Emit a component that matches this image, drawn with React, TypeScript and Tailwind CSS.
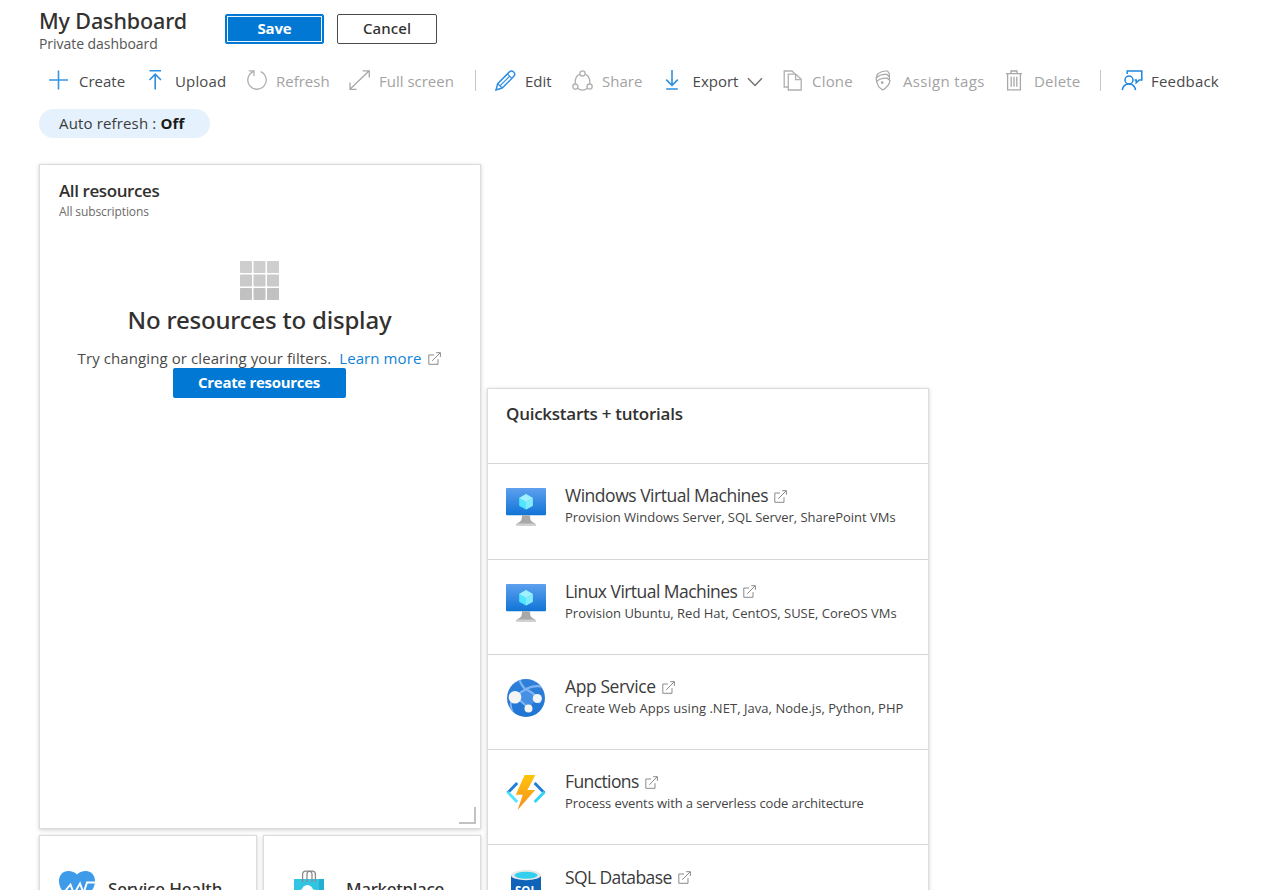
import type { ReactNode } from "react";
import { clsx } from "clsx";

interface IconProps {
  className?: string;
}

function PlusIcon() {
  return (
    <svg width="20" height="20" viewBox="0 0 20 20" fill="none" stroke="#3b95e0" strokeWidth="1.6">
      <path d="M10.5 0.5V19.5M1 10H20" />
    </svg>
  );
}

function UploadIcon() {
  return (
    <svg width="20" height="20" viewBox="0 0 20 20" fill="none" stroke="#2f8fe0" strokeWidth="1.6">
      <path d="M3.5 0.8H15M9.2 19.5V4.5M3.5 10L9.2 4.2L15 10" />
    </svg>
  );
}

function RefreshIcon() {
  return (
    <svg width="21" height="20" viewBox="0 0 21 20" fill="none" stroke="#b0b0b0" strokeWidth="1.3">
      <path d="M14.6 1.6A9.2 9.2 0 1 1 7.4 1.6M2.8 0.9H8V6" />
    </svg>
  );
}

function FullScreenIcon() {
  return (
    <svg width="21" height="20" viewBox="0 0 21 20" fill="none" stroke="#a8a8a8" strokeWidth="1.3">
      <path d="M1.2 19L20.2 0.8M13.6 0.8H20.3V7.4M1 12.6V19.3H7.6" />
    </svg>
  );
}

function EditIcon() {
  return (
    <svg width="21" height="21" viewBox="0 0 21 21" fill="none" stroke="#2f8fe0" strokeWidth="1.5">
      <path d="M1 20L2.7 13.6L14.2 2.1A3.1 3.1 0 0 1 18.7 6.5L7.2 18Z" />
      <path d="M12.4 3.9L16.9 8.4M2.7 13.6L7.2 18M5.2 15.7L15 5.9" strokeWidth="1.2" />
    </svg>
  );
}

function ShareIcon() {
  return (
    <svg width="21" height="21" viewBox="0 0 21 21" fill="none" stroke="#b0b0b0" strokeWidth="1.3">
      <circle cx="10.5" cy="3.4" r="2.6" />
      <circle cx="3.4" cy="16.6" r="2.6" />
      <circle cx="17.6" cy="16.6" r="2.6" />
      <path d="M7.9 4.2C4.6 5.4 2.8 8.8 3.2 13.9M13.1 4.2C16.4 5.4 18.2 8.8 17.8 13.9M5.6 18.3C8.4 20.6 12.6 20.6 15.4 18.3" />
    </svg>
  );
}

function ExportIcon() {
  return (
    <svg width="20" height="20" viewBox="0 0 20 20" fill="none" stroke="#2f8fe0" strokeWidth="1.6">
      <path d="M10 0V15.2M4.2 9.6L10 15.3L15.8 9.6M4.2 19H15.8" />
    </svg>
  );
}

function ChevronIcon() {
  return (
    <svg width="16" height="10" viewBox="0 0 16 10" fill="none" stroke="#707070" strokeWidth="1.4" className="mt-1">
      <path d="M1 1.2L8 8.4L15 1.2" />
    </svg>
  );
}

function CloneIcon() {
  return (
    <svg width="20" height="21" viewBox="0 0 20 21" fill="none" stroke="#b0b0b0" strokeWidth="1.3">
      <path d="M5.3 17H1.2V1H9L12 4" />
      <path d="M5.3 4.2H12.8L18.2 9.4V20H5.3ZM12.6 4.4V9.6H18" />
    </svg>
  );
}

function TagsIcon() {
  return (
    <svg width="20" height="21" viewBox="0 0 20 21" fill="none" stroke="#a8a8a8" strokeWidth="1.2">
      <path d="M2.6 11.6C5.2 9 8.6 8 13.2 8.2L16 10.6C15.4 14.4 12.8 17.6 8.6 20L4.6 16.6Z" />
      <path d="M2.6 11.6L2.2 8C5 5 8.6 4 13 4.4L15.4 7V10.2" />
      <path d="M2.2 8L3.4 4.2C6.2 1.8 9.4 0.8 13.6 1L15.4 4V7" />
      <circle cx="8.2" cy="12.6" r="0.8" />
    </svg>
  );
}

function TrashIcon() {
  return (
    <svg width="18" height="21" viewBox="0 0 18 21" fill="none" stroke="#a8a8a8" strokeWidth="1.3">
      <path d="M1 3.6H17M6 3.4V1H12V3.4M2.6 3.8V19.8H15.4V3.8M6.2 6.8V16.8M9 6.8V16.8M11.8 6.8V16.8" />
    </svg>
  );
}

function FeedbackIcon() {
  return (
    <svg width="22" height="21" viewBox="0 0 22 21" fill="none" stroke="#1f86de" strokeWidth="1.5">
      <circle cx="8" cy="10" r="4" />
      <path d="M1.2 20.2C1.8 16.2 4.4 14 8 14S14 16.4 14.6 20.2" />
      <path d="M6.2 4V1H20.8V10H18.2L15.2 12.8V10H13.6" />
    </svg>
  );
}

function ExternalIcon({ className }: IconProps) {
  return (
    <svg width="13" height="13" viewBox="0 0 13 13" fill="none" stroke="#858585" strokeWidth="0.95" className={className}>
      <path d="M6 3H0.8V12.3H10V7.2M4.2 8.8L12.2 0.8M8.2 0.7H12.4V4.9" />
    </svg>
  );
}

function GridIcon() {
  const cells = [0, 1, 2];
  return (
    <svg width="39" height="39" viewBox="0 0 39 39">
      {cells.map((row) =>
        cells.map((col) => (
          <rect
            key={`${row}-${col}`}
            x={col * 13.5}
            y={row * 13.5}
            width="12"
            height="12"
            rx="0.8"
            fill={row === 2 ? "#c1c1c1" : row === 1 ? "#cacaca" : "#cecece"}
          />
        )),
      )}
    </svg>
  );
}

function VmIcon({ id }: { id: string }) {
  return (
    <svg width="40" height="38" viewBox="0 0 40 38">
      <defs>
        <linearGradient id={id} x1="0" y1="0" x2="0" y2="1">
          <stop offset="0" stopColor="#5ea0ef" />
          <stop offset="1" stopColor="#0f74d6" />
        </linearGradient>
      </defs>
      <rect width="40" height="27.3" rx="1" fill={`url(#${id})`} />
      <path d="M16 27.3H24C24 32 25 33.8 28.6 35.2Q29.8 35.8 29.8 37.4H10.2Q10.2 35.8 11.4 35.2C15 33.8 16 32 16 27.3Z" fill="#a8a8a8" />
      <path d="M10.2 37.4Q10.2 35.6 12 35.4H28Q29.8 35.6 29.8 37.4Z" fill="#cfcfcf" />
      <path d="M20 6L26.8 9.9V17.7L20 21.6L13.2 17.7V9.9Z" fill="#50e6ff" />
      <path d="M20 6L26.8 9.9L20 13.8L13.2 9.9Z" fill="#9feffc" />
      <path d="M20 13.8L26.8 9.9V17.7L20 21.6Z" fill="#84e9fb" />
    </svg>
  );
}

function AppServiceIcon() {
  return (
    <svg width="40" height="38" viewBox="0 0 40 38">
      <defs>
        <linearGradient id="globe" x1="0" y1="0" x2="0" y2="1">
          <stop offset="0" stopColor="#2f80da" />
          <stop offset="1" stopColor="#1f75d3" />
        </linearGradient>
        <clipPath id="globe-clip">
          <circle cx="20" cy="19" r="19" />
        </clipPath>
      </defs>
      <circle cx="20" cy="19" r="19" fill="url(#globe)" />
      <g clipPath="url(#globe-clip)" fill="none" stroke="#7fb4f1" strokeWidth="2.2">
        <path d="M20 10L10 18L22.6 29L31.5 19Z" fill="#4590e4" stroke="none" />
        <path d="M13 0C15 5 17 8 19 9.6C23 12 28 14 31.5 19" />
        <path d="M10 18C16 11 26 5 37 8" />
        <path d="M10 18L22.6 29M6 20C4 24 4 28 7 34M31.5 19L34 24" strokeWidth="1.8" />
      </g>
      <circle cx="9" cy="18.2" r="6.3" fill="#f4f4f4" />
      <circle cx="31.3" cy="19.5" r="4.6" fill="#f4f4f4" />
      <circle cx="22.5" cy="29.4" r="4" fill="#f4f4f4" />
    </svg>
  );
}

function FunctionsIcon() {
  return (
    <svg width="40" height="38" viewBox="0 0 40 38">
      <defs>
        <linearGradient id="bolt" x1="0" y1="0" x2="0" y2="1">
          <stop offset="0" stopColor="#fdc50c" />
          <stop offset="1" stopColor="#f78d1e" />
        </linearGradient>
      </defs>
      <g fill="none" strokeWidth="2.9">
        <path d="M11.2 8.9L1.6 19.1" stroke="#1f7fd8" />
        <path d="M1.6 17.9L11.2 28.1" stroke="#50e6ff" />
        <path d="M28.6 8.9L38.4 19.1" stroke="#1f7fd8" />
        <path d="M38.4 17.9L28.6 28.1" stroke="#32d4f5" />
      </g>
      <path d="M18.6 1H29.4L21.4 16H29.2L11.6 36L16.8 20.8H9.8Z" fill="url(#bolt)" />
    </svg>
  );
}

function SqlIcon() {
  return (
    <svg width="40" height="38" viewBox="0 0 40 38">
      <path d="M5 6V33C5 35.8 11.8 38 20 38S35 35.8 35 33V6Z" fill="#0f63b8" />
      <ellipse cx="20" cy="6.2" rx="15" ry="5.1" fill="#e8e8e8" />
      <ellipse cx="20" cy="6.3" rx="11.6" ry="3.5" fill="#32cfee" />
      <text x="20" y="26" textAnchor="middle" fontSize="11.5" fontWeight="700" fill="#fff">
        SQL
      </text>
    </svg>
  );
}

function HeartIcon() {
  return (
    <svg width="36" height="34" viewBox="0 0 36 34">
      <path d="M18 33C10 27 0 20 0 10C0 4 4 0 9.2 0C13 0 16 1.4 18 3.6C20 1.4 23 0 26.8 0C32 0 36 4 36 10C36 20 26 27 18 33Z" fill="#3d9bea" />
      <path d="M6.5 19.5L11.5 13.5L15 23L21 12.5L24.5 22L28 11.5H36" fill="none" stroke="#fff" strokeWidth="1.9" />
    </svg>
  );
}

function BagIcon() {
  return (
    <svg width="30" height="38" viewBox="0 0 30 38">
      <rect y="9" width="30" height="29" fill="#32c5e2" />
      <rect x="25" y="9" width="5" height="29" fill="#24b0cf" />
      <path d="M8.6 12V4.5Q8.6 1.2 11.8 1.2H14.6Q18 1.2 18 4.5V12M13 12V4.5Q13 1.2 16 1.2H18.2Q21.4 1.2 21.4 4.5V12" fill="none" stroke="#8a8a8a" strokeWidth="1.3" />
      <circle cx="13.4" cy="20.6" r="5.6" fill="#fff" />
      <circle cx="7.6" cy="23.6" r="4" fill="#fff" />
      <circle cx="19.4" cy="23" r="3.6" fill="#fff" />
    </svg>
  );
}

interface CommandProps {
  icon: ReactNode;
  label: string;
  className: string;
  labelClass: string;
  disabled?: boolean;
  children?: ReactNode;
}

function Command({ icon, label, className, labelClass, disabled, children }: CommandProps) {
  return (
    <button type="button" disabled={disabled} className={clsx("flex h-6 shrink-0 items-center", className)}>
      {icon}
      <span
        className={clsx(
          "whitespace-nowrap pt-px text-[15px] leading-5",
          labelClass,
          disabled ? "text-[#a3a3a3]" : "text-[#4a4a4a]",
        )}
      >
        {label}
      </span>
      {children}
    </button>
  );
}

const quickstarts = [
  {
    title: "Windows Virtual Machines",
    text: "Provision Windows Server, SQL Server, SharePoint VMs",
    icon: <VmIcon id="vm-windows" />,
    titleClass: "tracking-[-0.48px]",
    textClass: "tracking-[-0.03px]",
  },
  {
    title: "Linux Virtual Machines",
    text: "Provision Ubuntu, Red Hat, CentOS, SUSE, CoreOS VMs",
    icon: <VmIcon id="vm-linux" />,
    titleClass: "tracking-[-0.54px]",
    textClass: "tracking-normal",
  },
  {
    title: "App Service",
    text: "Create Web Apps using .NET, Java, Node.js, Python, PHP",
    icon: <AppServiceIcon />,
    titleClass: "tracking-[-0.4px]",
    textClass: "tracking-[0.04px]",
  },
  {
    title: "Functions",
    text: "Process events with a serverless code architecture",
    icon: <FunctionsIcon />,
    titleClass: "tracking-[-0.6px]",
    textClass: "tracking-[-0.1px]",
  },
  {
    title: "SQL Database",
    text: "Managed relational SQL Database as a Service",
    icon: <SqlIcon />,
    titleClass: "tracking-[-0.6px]",
    textClass: "tracking-[-0.1px]",
  },
];

const tileClass = "border border-[#dcdcdc] bg-white shadow-[0_1px_4px_rgba(0,0,0,0.2)]";

export default function App() {
  return (
    <div className="h-[890px] w-[1280px] overflow-hidden bg-white font-['Open_Sans','Noto_Sans',sans-serif] text-[#323130]">
      <header className="flex h-[56px] pl-[39px]">
        <div className="w-[186px] pt-2">
          <h1 className="whitespace-nowrap font-['Noto_Sans'] text-[21.5px] font-medium leading-[26px] tracking-[-0.12px]">
            My Dashboard
          </h1>
          <p className="whitespace-nowrap text-[14px] leading-[19px] tracking-[-0.05px] text-[#555]">Private dashboard</p>
        </div>
        <div className="flex gap-[13px] pt-[14px]">
          <button
            type="button"
            className="h-[30px] w-[99px] rounded-[2px] border border-[#0078d4] bg-[#0078d4] pb-[2px] text-[15px] font-bold leading-none tracking-[-0.2px] text-white shadow-[inset_0_0_0_1px_#0078d4,inset_0_0_0_2px_#e8f3fc]"
          >
            Save
          </button>
          <button
            type="button"
            className="h-[30px] w-[100px] rounded-[2px] border border-[#4a4a4a] pb-[2px] font-['Noto_Sans'] text-[15px] font-medium leading-none tracking-[0.1px]"
          >
            Cancel
          </button>
        </div>
      </header>

      <nav className="flex h-[48px] items-center pl-[48px]">
        <Command icon={<PlusIcon />} label="Create" className="w-[98px]" labelClass="ml-[11px]" />
        <Command icon={<UploadIcon />} label="Upload" className="w-[100px]" labelClass="ml-[9px] tracking-[0.15px]" />
        <Command icon={<RefreshIcon />} label="Refresh" className="w-[103px]" labelClass="ml-[9px]" disabled />
        <Command icon={<FullScreenIcon />} label="Full screen" className="w-[126px]" labelClass="ml-[9px]" disabled />
        <span className="h-[21px] w-px shrink-0 bg-[#c8c8c8]" />
        <Command icon={<EditIcon />} label="Edit" className="ml-[19px] w-[77px]" labelClass="ml-[9px]" />
        <Command icon={<ShareIcon />} label="Share" className="w-[90px]" labelClass="ml-[9px]" disabled />
        <Command icon={<ExportIcon />} label="Export" className="w-[121px]" labelClass="ml-[10px] w-[47px] mr-[8px]">
          <ChevronIcon />
        </Command>
        <Command icon={<CloneIcon />} label="Clone" className="w-[91px]" labelClass="ml-[9px] tracking-[0.2px]" disabled />
        <Command
          icon={<TagsIcon />}
          label="Assign tags"
          className="w-[131px]"
          labelClass="ml-[9px] tracking-[0.35px]"
          disabled
        />
        <Command icon={<TrashIcon />} label="Delete" className="w-[95px]" labelClass="ml-[11px] tracking-[0.2px]" disabled />
        <span className="h-[21px] w-px shrink-0 bg-[#c8c8c8]" />
        <Command icon={<FeedbackIcon />} label="Feedback" className="ml-[20px]" labelClass="ml-[8px] tracking-[0.2px]" />
      </nav>

      <div className="flex h-[60px] pl-[39px] pt-[5px]">
        <div className="flex h-[29px] w-[171px] items-center rounded-full bg-[#e5f1fc] pl-[20px] text-[15px] text-[#3b3b3b]">
          <span className="whitespace-pre tracking-[0.15px]">Auto refresh : </span>
          <span className="font-bold tracking-[0.2px] text-[#1b1a19]">Off</span>
        </div>
      </div>

      <main className="flex items-start gap-[6px] pl-[39px]">
        <div className="flex w-[442px] flex-col gap-[6px]">
          <section className={clsx(tileClass, "relative h-[665px]")}>
            <div className="pl-[19px] pt-[15px]">
              <h2 className="text-[17px] font-semibold leading-[22px] tracking-[-0.4px]">All resources</h2>
              <p className="text-[12px] leading-[19px] tracking-[-0.1px] text-[#6b6b6b]">All subscriptions</p>
            </div>
            <div className="flex flex-col items-center pr-[2px] pt-[40px]">
              <GridIcon />
              <h3 className="ml-px mt-1 whitespace-nowrap font-['Noto_Sans'] text-[24px] font-medium leading-8 tracking-[-0.2px]">
                No resources to display
              </h3>
              <p className="ml-px mt-[12px] flex h-[20px] items-center whitespace-nowrap text-[15px] tracking-[0.09px] text-[#4a4a4a]">
                Try changing or clearing your filters.
                <a className="ml-2 text-[#1083d8]">Learn more</a>
                <ExternalIcon className="ml-[7px]" />
              </p>
              <button
                type="button"
                className="h-[30px] w-[173px] rounded-[2px] bg-[#0078d4] pb-[2px] text-[15px] font-bold leading-none tracking-[-0.3px] text-white"
              >
                Create resources
              </button>
            </div>
            <span className="absolute bottom-1 right-1 h-[17px] w-[17px] border-b-2 border-r-2 border-[#c2c2c2]" />
          </section>

          <div className="flex gap-[6px]">
            <section className={clsx(tileClass, "flex h-[218px] w-[218px] pl-[19px] pt-[35px]")}>
              <HeartIcon />
              <h2 className="ml-[13px] mt-[6px] whitespace-nowrap font-['Noto_Sans'] text-[17px] font-medium leading-[24px] tracking-[-0.15px]">
                Service Health
              </h2>
            </section>
            <section className={clsx(tileClass, "flex h-[218px] w-[218px] pl-[30px] pt-[34px]")}>
              <BagIcon />
              <h2 className="ml-[22px] mt-[7px] whitespace-nowrap font-['Noto_Sans'] text-[17px] font-medium leading-[24px] tracking-[-0.3px]">
                Marketplace
              </h2>
            </section>
          </div>
        </div>

        <section className={clsx(tileClass, "mt-[224px] w-[442px]")}>
          <h2 className="h-[74.3px] pl-[18px] pt-[13px] text-[17px] font-semibold leading-[23px] tracking-[-0.25px]">
            Quickstarts + tutorials
          </h2>
          {quickstarts.map((item) => (
            <a key={item.title} className="flex h-[95.3px] border-t border-[#d6d6d6] pl-[18px] pt-[24px]">
              {item.icon}
              <div className="-mt-[4.5px] ml-[19px]">
                <div className="flex h-[23.5px] items-center">
                  <span className={clsx("whitespace-nowrap text-[17.5px] text-[#3b3b3b]", item.titleClass)}>
                    {item.title}
                  </span>
                  <ExternalIcon className="ml-[6px] mt-[2px]" />
                </div>
                <p className={clsx("whitespace-nowrap text-[13px] leading-[21px] text-[#444]", item.textClass)}>
                  {item.text}
                </p>
              </div>
            </a>
          ))}
        </section>
      </main>
    </div>
  );
}
